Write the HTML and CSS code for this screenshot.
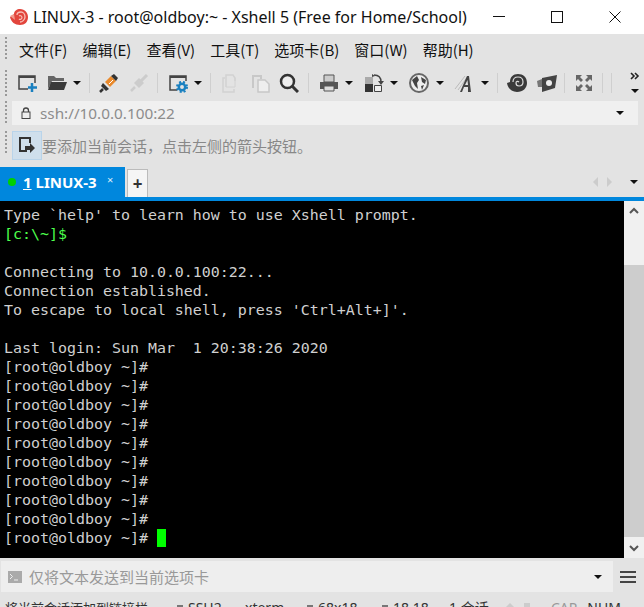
FILE: index.html
```html
<!DOCTYPE html>
<html lang="zh">
<head>
<meta charset="utf-8">
<title>LINUX-3 - Xshell 5</title>
<link rel="stylesheet" href="styles.css">
</head>
<body>
<div class="app">
  <header class="titlebar">
    <svg class="logo" width="20" height="18" viewBox="0 0 20 18"><path d="M1 9c1 5 5 8 10 8 5 0 8-3 8-8 0-4-3-8-8-8-3 0-6 2-6 5L1 9z" fill="#e2453c"/><path d="M8 7c0-2 2-3 4-3s4 2 4 5-3 5-5 5" fill="none" stroke="#f8c0b8" stroke-width="1.300"/><path d="M10 8c1-1 3 0 3 1.500S11 12 10 11" fill="none" stroke="#f8c0b8" stroke-width="1.200"/><path d="M1 8l4-2 1 6z" fill="#f29a8e"/></svg>
    <span class="title">LINUX-3 - root@oldboy:~ - Xshell 5 (Free for Home/School)</span>
    <div class="winbtns">
      <svg width="12" height="12" viewBox="0 0 12 12"><path d="M0 5.500h12" stroke="#111" fill="none"/></svg>
      <svg width="12" height="12" viewBox="0 0 12 12"><rect x=".5" y=".5" width="11" height="11" fill="none" stroke="#111"/></svg>
      <svg width="12" height="12" viewBox="0 0 12 12"><path d="M.5.500l11 11M11.500.500l-11 11" stroke="#111" fill="none"/></svg>
    </div>
  </header>

  <nav class="menubar">
    <span class="grip"></span>
    <span>文件(F)</span><span>编辑(E)</span><span>查看(V)</span><span>工具(T)</span><span>选项卡(B)</span><span>窗口(W)</span><span>帮助(H)</span>
  </nav>

  <div class="toolbar">
    <span class="grip"></span>
    <svg class="ic at-new" viewBox="0 0 20 20"><path d="M11 16H2V3h16v7" fill="none" stroke="#444" stroke-width="1.500"/><path d="M2 3h16v2H2z" fill="#444"/><path d="M15 10v9M11 14.500h9" stroke="#1a80c0" stroke-width="2.500"/></svg>
    <svg class="ic g10" viewBox="0 0 20 20"><path d="M1 16V3h6l2 2h8v3H5L1 16z" fill="#666"/><path d="M4 9h16l-3 8H1z" fill="#3a3a3a"/></svg>
    <i class="arrow g6"></i>
    <i class="sep g8"></i>
    <svg class="ic g9" viewBox="0 0 20 20"><path d="M1 19l3-3" stroke="#333" stroke-width="2.500"/><path d="M4 10l6 6-3 2-5-5z" fill="#333"/><path d="M6 9l6-6 5 5-6 6z" fill="#e98a2c"/><path d="M12 3l3-2 4 4-2 3z" fill="#333"/><path d="M10 11l4-4" stroke="#fff"/></svg>
    <svg class="ic g10" viewBox="0 0 20 20"><path d="M2 18l4-4" stroke="#ccc" stroke-width="2.500"/><path d="M5 10l5-5 5 5-5 5z" fill="#ccc"/><path d="M12 8l6-6" stroke="#ccc" stroke-width="3"/></svg>
    <i class="sep g8"></i>
    <svg class="ic g10" viewBox="0 0 20 20"><path d="M9 17H2V3h16v5" fill="none" stroke="#444" stroke-width="1.500"/><path d="M2 3h16v2H2z" fill="#444"/><circle cx="14" cy="14" r="3.200" fill="none" stroke="#1a80c0" stroke-width="2.500"/><circle cx="14" cy="14" r="5" fill="none" stroke="#1a80c0" stroke-dasharray="2 2" stroke-width="2"/></svg>
    <i class="arrow g6"></i>
    <i class="sep g8"></i>
    <svg class="ic g9" viewBox="0 0 20 20"><path d="M6 14V2h7l2 3v3M5 5H3v14h11v-3" fill="none" stroke="#d2d2d2" stroke-width="1.500"/><path d="M6 14h9V5" fill="none" stroke="#d2d2d2"/></svg>
    <svg class="ic g10" viewBox="0 0 20 20"><path d="M3 15V3h8v3" fill="none" stroke="#c8c8c8" stroke-width="2"/><path d="M8 7h7l4 4v8H8z" fill="#eee" stroke="#c8c8c8" stroke-width="1.500"/></svg>
    <svg class="ic g9" viewBox="0 0 20 20"><circle cx="8.500" cy="8.500" r="6.500" fill="#eee" stroke="#333" stroke-width="2.500"/><path d="M13 13l6 6" stroke="#333" stroke-width="3"/></svg>
    <i class="sep g9"></i>
    <svg class="ic g10" viewBox="0 0 20 20"><path d="M5 2h10v7H5z" fill="#ccc" stroke="#555"/><path d="M1 9h18v7H1z" fill="#555"/><path d="M5 13h10v5H5z" fill="#ddd" stroke="#555"/></svg>
    <i class="arrow g6"></i>
    <svg class="ic g11" viewBox="0 0 20 20"><path d="M1 4h8v7H1z" fill="#aaa"/><path d="M1 11h8v8H1z" fill="#333"/><path d="M10.500 12.500h7v6h-7z" fill="#eee" stroke="#444"/><path d="M10 2c4 0 7 2 7 7" fill="none" stroke="#444" stroke-width="1.500"/><path d="M14 8h6l-3 4zM8 1v3l3-1z" fill="#444"/></svg>
    <i class="arrow g6"></i>
    <svg class="ic g11" viewBox="0 0 20 20"><circle cx="10" cy="10" r="9" fill="#eee" stroke="#666" stroke-width="2"/><path d="M3 7l5-4 2 4-2 3 1 6-3-3zM12 4l5 3-1 4-3-2zM12 13l3-1-2 5z" fill="#444"/></svg>
    <i class="arrow g7"></i>
    <svg class="ic g10" viewBox="0 0 20 20"><path d="M1 16L11 3M4 17L14 3" stroke="#bbb"/><path d="M6 19l7-16h2l2 16h-3v-5H10l-2 5zM11 12h3l-.5-5z" fill="#444" fill-rule="evenodd"/></svg>
    <i class="arrow g7"></i>
    <i class="sep g8"></i>
    <svg class="ic g9" viewBox="0 0 20 20"><path d="M0 10c1 6 5 9 10 9 6 0 10-4 10-9 0-6-4-9-9-9-5 0-8 3-8 8z" fill="#3a3a3a"/><path d="M6 9c0-3 2-5 5-5s5 2 5 5-2 4-4 4-3-1-3-3 2-2 3-1" fill="none" stroke="#ddd" stroke-width="1.200"/></svg>
    <svg class="ic g10" viewBox="0 0 20 20"><path d="M5 5l15-3-2 13-13 4z" fill="#444"/><path d="M0 8l5-2v8l-4 0z" fill="#777"/><circle cx="12" cy="10" r="3" fill="#eee"/></svg>
    <i class="sep g7"></i>
    <svg class="ic g9" viewBox="0 0 20 20"><path d="M2 2h6L6 4l3 3-2 2-3-3-2 2zM18 2v6l-2-2-3 3-2-2 3-3-2-2zM2 18v-6l2 2 3-3 2 2-3 3 2 2zM18 18h-6l2-2-3-3 2-2 3 3 2-2z" fill="#666"/></svg>
    <i class="sep g8"></i>
    <i class="sep g8"></i>
    <div class="more g17">
      <svg width="10" height="8" viewBox="0 0 10 8"><path d="M1 1l3 3-3 3M5 1l3 3-3 3" fill="none" stroke="#222" stroke-width="1.600"/></svg>
      <i class="arrow"></i>
    </div>
  </div>

  <div class="addressbar">
    <span class="grip"></span>
    <div class="addressfield">
      <svg width="10" height="12" viewBox="0 0 10 12"><path d="M2.500 5V3.500a2.500 2.500 0 0 1 5 0V5" fill="none" stroke="#444" stroke-width="1.300"/><rect x="1" y="5" width="8" height="6.500" fill="#eee" stroke="#444"/></svg>
      <span class="addresstext">ssh://10.0.0.100:22</span>
      <i class="arrow push"></i>
    </div>
  </div>

  <div class="sessionbar">
    <span class="grip"></span>
    <span class="addbtn">
      <svg width="18" height="18" viewBox="0 0 18 18"><path d="M9 14H2V1h10v5" fill="none" stroke="#333" stroke-width="2"/><path d="M7 9h5V6l5 5-5 5v-3H7z" fill="#333"/></svg>
    </span>
    <span class="hint">要添加当前会话&#xFF0C;点击左侧的箭头按钮。</span>
  </div>

  <div class="tabbar">
    <div class="tab">
      <i class="dot"></i>
      <span class="tabname"><u>1</u> LINUX-3</span>
      <span class="tabclose">×</span>
    </div>
    <div class="newtab">+</div>
    <div class="tabnav">
      <i class="tri-l"></i><i class="tri-r"></i><i class="arrow"></i>
    </div>
  </div>

  <main class="termwrap">
<pre class="terminal">Type `help' to learn how to use Xshell prompt.
<span class="green">[c:\~]$</span>

Connecting to 10.0.0.100:22...
Connection established.
To escape to local shell, press 'Ctrl+Alt+]'.

Last login: Sun Mar  1 20:38:26 2020
[root@oldboy ~]#
[root@oldboy ~]#
[root@oldboy ~]#
[root@oldboy ~]#
[root@oldboy ~]#
[root@oldboy ~]#
[root@oldboy ~]#
[root@oldboy ~]#
[root@oldboy ~]#
[root@oldboy ~]# <span class="cursor"></span></pre>
    <div class="scrollbar">
      <svg class="sb-btn" width="20" height="20" viewBox="0 0 20 20"><path d="M6 12l4-4 4 4" fill="none" stroke="#555" stroke-width="2"/></svg>
      <div class="sb-gap"></div>
      <div class="sb-thumb"></div>
      <svg class="sb-btn" width="20" height="21" viewBox="0 0 20 21"><path d="M6 9l4 4 4-4" fill="none" stroke="#555" stroke-width="2"/></svg>
    </div>
  </main>

  <div class="composebar">
    <div class="composefield">
      <svg width="14" height="12" viewBox="0 0 14 12"><rect width="14" height="12" fill="#aaa"/><path d="M2 3l2.500 2.500L2 8M6 9h4" fill="none" stroke="#eee"/></svg>
      <span class="composetext">仅将文本发送到当前选项卡</span>
      <i class="arrow push"></i>
    </div>
    <svg class="hamb" width="16" height="14" viewBox="0 0 16 14"><path d="M0 2h16M0 7h16M0 12h16" stroke="#444" stroke-width="2"/></svg>
  </div>

  <footer class="statusbar">
    <span class="st-msg">将当前会话添加到链接栏</span>
    <span class="st-item st-ssh"><i class="st-icon"></i>SSH2</span>
    <span class="st-item st-term">xterm</span>
    <span class="st-item st-size"><i class="st-icon"></i>68x18</span>
    <span class="st-item st-pos"><i class="st-icon"></i>18,18</span>
    <span class="st-item st-sess">1 会话</span>
    <i class="st-up"></i>
    <i class="st-down"></i>
    <span class="st-item st-cap">CAP</span>
    <span class="st-item st-num">NUM</span>
  </footer>
</div>
</body>
</html>
```
FILE: styles.css
```css
* { box-sizing: border-box; }
html, body { margin: 0; height: 100%; overflow: hidden; }
body { font-family: "Noto Sans", "Noto Sans CJK SC", sans-serif; background: #e3e3e3; color: #111; }
.app { width: 644px; height: 607px; overflow: hidden; display: flex; flex-direction: column; }

.titlebar { height: 34px; flex: none; background: #fff; display: flex; align-items: center; padding-left: 9px; }
.logo { flex: none; }
.title { margin-left: 4px; font-size: 16px; white-space: nowrap; color: #111; }
.winbtns { margin-left: auto; display: flex; gap: 46px; padding-right: 23px; }

.grip { width: 2px; flex: none; background: repeating-linear-gradient(#999 0 2px, transparent 2px 4px); }

.menubar { height: 30px; flex: none; display: flex; align-items: center; padding-left: 5px; gap: 15px; font: 15px "Noto Sans CJK SC", sans-serif; white-space: nowrap; }
.menubar .grip { height: 24px; margin-right: -3px; }

.toolbar { height: 34px; flex: none; display: flex; align-items: center; padding: 3px 0 0 5px; }
.toolbar .grip { height: 26px; }
.ic { width: 20px; height: 20px; flex: none; display: block; }
.at-new { margin-left: 10px; }
.g6 { margin-left: 6px; }
.g7 { margin-left: 7px; }
.g8 { margin-left: 8px; }
.g9 { margin-left: 9px; }
.g10 { margin-left: 10px; }
.g11 { margin-left: 11px; }
.g17 { margin-left: 17px; }
.arrow { flex: none; width: 0; height: 0; border-style: solid; border-width: 4px 4px 0; border-color: #111 transparent transparent; display: block; }
.sep { flex: none; width: 1px; height: 20px; background: #cfcfcf; display: block; }
.more { display: flex; flex-direction: column; align-items: center; gap: 9px; width: 12px; }
.push { margin-left: auto; }

.addressbar { height: 28px; flex: none; display: flex; align-items: center; padding: 2px 6px 0 5px; }
.addressbar .grip { height: 24px; }
.addressfield { flex: 1; margin-left: 5px; height: 24px; background: #f0f0f0; display: flex; align-items: center; padding: 0 14px 0 9px; }
.addresstext { margin-left: 9px; font-size: 15.300px; color: #8c8c8c; white-space: nowrap; }

.sessionbar { height: 34px; flex: none; display: flex; align-items: flex-end; padding-left: 5px; }
.sessionbar .grip { height: 24px; margin-bottom: 5px; }
.addbtn { margin-left: 5px; width: 30px; height: 29px; background: #cfdfec; border: 1px solid #b9d4ea; display: flex; align-items: center; justify-content: center; }
.hint { font: 15px/29px "Noto Sans CJK SC", sans-serif; color: #888; white-space: nowrap; }

.tabbar { height: 41px; flex: none; display: flex; align-items: flex-end; border-bottom: 4px solid #0087dd; }
.tab { width: 125px; height: 30px; background: #0087dd; color: #fff; display: flex; align-items: center; padding-left: 8px; position: relative; }
.dot { width: 8px; height: 8px; border-radius: 50%; background: #00d000; flex: none; }
.tabname { margin-left: 7px; font-size: 15px; font-weight: 700; white-space: nowrap; }
.tabclose { position: absolute; left: 107px; top: 7px; font-size: 11px; line-height: 12px; color: #dceefa; }
.newtab { margin-left: 2px; width: 21px; height: 28px; background: #f5f5f5; border: 1px solid #bbb; border-bottom: 0; display: flex; align-items: center; justify-content: center; font-size: 17px; font-weight: 700; color: #333; }
.tabnav { margin-left: auto; height: 30px; display: flex; align-items: center; padding-right: 6px; }
.tri-l, .tri-r { width: 0; height: 0; border-style: solid; display: block; }
.tri-l { border-width: 5px 5px 5px 0; border-color: transparent #ccc transparent transparent; }
.tri-r { margin-left: 9px; margin-right: 18px; border-width: 5px 0 5px 5px; border-color: transparent transparent transparent #ccc; }

.termwrap { height: 357px; flex: none; background: #000; display: flex; }
.terminal { flex: 1; margin: 0; padding: 5px 4px 0; font: 14.950px/19px "DejaVu Sans Mono", monospace; color: #d0d0d0; overflow: hidden; }
.green { color: #4cff4c; }
.cursor { display: inline-block; width: 9px; height: 18px; vertical-align: -4px; background: #00ff00; }
.scrollbar { width: 20px; flex: none; background: #f0f0f0; display: flex; flex-direction: column; }
.sb-btn { display: block; flex: none; }
.sb-gap { height: 44px; flex: none; }
.sb-thumb { flex: 1; background: #cdcdcd; }

.composebar { height: 34px; flex: none; padding-top: 3px; display: flex; align-items: center; }
.composefield { width: 612px; margin-left: 1px; height: 31px; background: #eee; display: flex; align-items: center; padding: 0 11px 0 7px; }
.composetext { margin-left: 7px; font: 15px "Noto Sans CJK SC", sans-serif; color: #999; white-space: nowrap; }
.hamb { margin-left: 7px; flex: none; }

.statusbar { height: 30px; flex: none; display: flex; align-items: flex-start; padding: 6px 0 0 5px; font: 13px/20px "Noto Sans CJK SC", sans-serif; white-space: nowrap; color: #333; }
.st-msg { width: 169px; }
.st-item { font: 14px/20px "Noto Sans", "Noto Sans CJK SC", sans-serif; display: flex; align-items: flex-start; }
.st-icon { width: 6px; height: 8px; flex: none; margin: 7px 5px 0 -11px; background: #777; }
.st-ssh { width: 57px; margin-left: 14px; }
.st-term { width: 73px; }
.st-size { width: 75px; }
.st-pos { width: 56px; }
.st-sess { width: 56px; }
.st-up { width: 0; height: 0; margin-top: 5px; border-style: solid; border-width: 0 5px 5px; border-color: transparent transparent #ccc; }
.st-down { width: 6px; height: 6px; margin: 5px 0 0 9px; background: #ccc; }
.st-cap { margin-left: 21px; color: #999; }
.st-num { margin-left: 10px; }
```
